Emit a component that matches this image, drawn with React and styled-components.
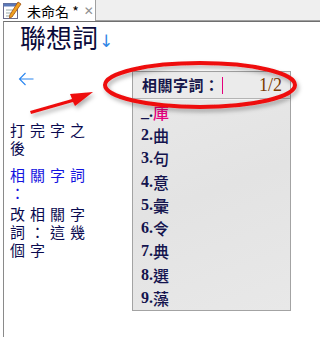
import React from 'react'
import styled, { createGlobalStyle } from 'styled-components'

const GlobalStyle = createGlobalStyle`
  html, body { margin: 0; padding: 0; background: #ffffff; }
  body { font-family: "Noto Sans CJK TC", "Liberation Sans", sans-serif; }
`

const Window = styled.div`
  position: relative;
  width: 320px;
  height: 337px;
  overflow: hidden;
  display: flex;
  flex-direction: column;
  background: #ffffff;
`

const TabBar = styled.div`
  display: flex;
  height: 21px;
  background: #ffffff;
`

const Tab = styled.div`
  display: flex;
  align-items: center;
  width: 96px;
  height: 21px;
  box-sizing: border-box;
  border-right: 1px solid #a0a0a0;
  background: #ffffff;
  padding-left: 2px;
  gap: 5px;
  white-space: nowrap;
`

const TabTitle = styled.span`
  font-family: "Noto Sans CJK TC", sans-serif;
  font-size: 14px;
  line-height: 18px;
  color: #000000;
`

const TabClose = styled.span`
  font-family: "DejaVu Sans", sans-serif;
  font-size: 12px;
  line-height: 18px;
  color: #909090;
`

const TabFiller = styled.div`
  flex: 1;
  height: 20px;
  background: #efefef;
  border-bottom: 1px solid #a0a0a0;
`

const Editor = styled.div`
  flex: 1;
  margin-left: 3px;
  border-top: 1px solid #6f6f6f;
  border-left: 1px solid #8a8a8a;
  display: flex;
  flex-direction: column;
`

const TitleRow = styled.div`
  display: flex;
  align-items: flex-end;
  padding-left: 16px;
  height: 30px;
`

const Title = styled.span`
  font-family: "Noto Sans CJK TC", serif;
  font-size: 26px;
  line-height: 30px;
  color: #0a0a3a;
`

const DownArrow = styled.span`
  font-family: "DejaVu Sans", sans-serif;
  font-size: 17px;
  line-height: 22px;
  color: #2f86e6;
  margin-left: 1px;
`

const Body = styled.div`
  display: flex;
`

const Side = styled.div`
  width: 90px;
  padding-left: 6px;
  flex-shrink: 0;
`

const BackArrow = styled.div`
  padding-left: 8px;
  margin-top: 17px;
  height: 20px;
  display: flex;
  align-items: center;
`

const Note = styled.p`
  margin: ${p => p.$top}px 0 0 0;
  font-family: "Noto Sans CJK TC", sans-serif;
  font-size: 15px;
  line-height: 18px;
  letter-spacing: 5px;
  line-break: anywhere;
  color: ${p => (p.$accent ? '#1414e0' : '#0a0a50')};
`

const Panel = styled.div`
  margin-top: 19px;
  margin-left: 32px;
  width: 159px;
  height: 240px;
  box-sizing: border-box;
  border: 1px solid #a3a3a3;
  background: linear-gradient(160deg, #e9e9e9 0%, #e3e3e3 50%, #e8e8e8 100%);
  display: flex;
  flex-direction: column;
`

const Header = styled.div`
  display: flex;
  align-items: center;
  height: 26px;
  padding: 0 8px 0 9px;
  border-bottom: 1px solid #b4b4b4;
  box-shadow: 0 1px 0 #f4f4f4;
  background: #ebebeb;
`

const HeaderLabel = styled.span`
  font-family: "Noto Sans CJK TC", sans-serif;
  font-weight: 700;
  font-size: 15px;
  line-height: 20px;
  color: #16164a;
  letter-spacing: 0.5px;
`

const Caret = styled.span`
  display: inline-block;
  width: 1px;
  height: 17px;
  background: #e4007c;
  margin-left: 2px;
`

const Page = styled.span`
  margin-left: auto;
  font-family: "Liberation Serif", serif;
  font-size: 18px;
  line-height: 20px;
  color: #7a3a00;
`

const List = styled.ol`
  list-style: none;
  margin: 0;
  padding: 1px 0 0 8px;
`

const Item = styled.li`
  height: 23.3px;
  display: flex;
  align-items: center;
  font-family: "Liberation Serif", serif;
  font-weight: 700;
  font-size: 16px;
  line-height: 20px;
  color: #14144e;
`

const Word = styled.span`
  font-family: "Noto Sans CJK TC", serif;
  font-weight: 500;
  color: ${p => (p.$current ? '#e6007e' : '#14144e')};
`

const Overlay = styled.svg`
  position: absolute;
  left: 0;
  top: 0;
  pointer-events: none;
`

const NotepadIcon = () => (
  <svg width="20" height="19" viewBox="0 0 20 19">
    <rect x="1.5" y="2.5" width="14" height="15" fill="#ffffff" stroke="#6a6a8a" />
    <rect x="1.5" y="2.5" width="14" height="3" fill="#5a78b8" />
    <line x1="4" y1="9" x2="13" y2="9" stroke="#9aa" />
    <line x1="4" y1="12" x2="13" y2="12" stroke="#9aa" />
    <line x1="4" y1="15" x2="11" y2="15" stroke="#9aa" />
    <path d="M16 1 L19 3 L10 16 L7.5 17 L7.8 14 Z" fill="#f0a020" stroke="#a05010" strokeWidth="0.8" />
  </svg>
)

const LeftArrowIcon = () => (
  <svg width="16" height="14" viewBox="0 0 16 14">
    <path d="M15.5 7 H1.5 M7.5 1 L1.5 7 L7.5 13" fill="none" stroke="#2a86f0" strokeWidth="1.1" />
  </svg>
)

const words = ['庫', '曲', '句', '意', '彙', '令', '典', '選', '藻']

export default function App() {
  return (
    <Window>
      <GlobalStyle />
      <TabBar>
        <Tab>
          <NotepadIcon />
          <TabTitle>未命名 *</TabTitle>
          <TabClose>✕</TabClose>
        </Tab>
        <TabFiller />
      </TabBar>
      <Editor>
        <TitleRow>
          <Title>聯想詞</Title>
          <DownArrow>↓</DownArrow>
        </TitleRow>
        <Body>
          <Side>
            <BackArrow>
              <LeftArrowIcon />
            </BackArrow>
            <Note $top={32}>打完字之後</Note>
            <Note $top={9} $accent>相關字詞：</Note>
            <Note $top={3}>改相關字詞：這幾個字</Note>
          </Side>
          <Panel>
            <Header>
              <HeaderLabel>相關字詞：</HeaderLabel>
              <Caret />
              <Page>1/2</Page>
            </Header>
            <List>
              {words.map((w, i) => (
                <Item key={w}>
                  {i === 0 ? '_.' : `${i + 1}.`}
                  <Word $current={i === 0}>{w}</Word>
                </Item>
              ))}
            </List>
          </Panel>
        </Body>
      </Editor>
      <Overlay width="320" height="337" viewBox="0 0 320 337">
        <defs>
          <filter id="sh" x="-10%" y="-30%" width="130%" height="170%">
            <feDropShadow dx="2" dy="3" stdDeviation="2" floodColor="#000" floodOpacity="0.3" />
          </filter>
        </defs>
        <ellipse cx="200" cy="85" rx="95" ry="22" fill="none" stroke="#ee1111" strokeWidth="4" filter="url(#sh)" />
        <path d="M30 111 L72 99 L70 94 L93 92 L75 106 L73 102 L31 114 Z" fill="#ee1111" filter="url(#sh)" />
      </Overlay>
    </Window>
  )
}
